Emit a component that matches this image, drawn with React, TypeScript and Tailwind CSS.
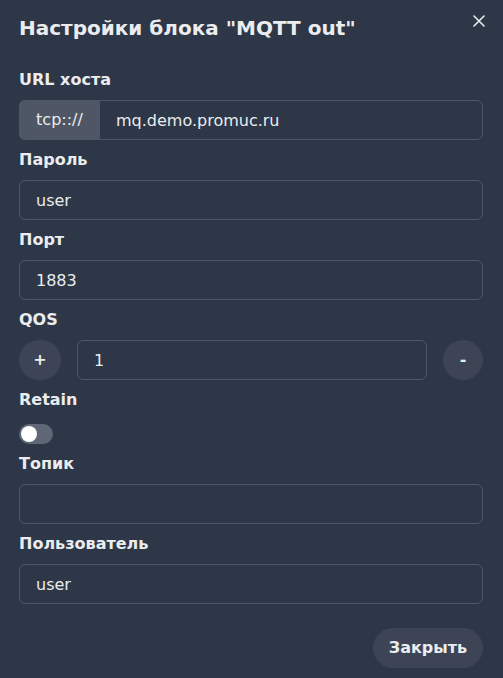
import React, { useState } from "react";

function Field({ label, children }: { label: string; children: React.ReactNode }) {
  return (
    <div className="flex flex-col">
      <label className="text-base leading-6 font-bold text-[#ebecee] mb-2">{label}</label>
      {children}
    </div>
  );
}

function TextInput({ value }: { value: string }) {
  return (
    <input
      defaultValue={value}
      className="h-10 w-full rounded-md border border-[#4f5665] bg-transparent px-4 text-base text-[#ebecee] outline-none"
    />
  );
}

export default function App() {
  const [retain, setRetain] = useState(false);
  const [qos, setQos] = useState(1);

  return (
    <div
      className="relative min-h-[678px] w-full bg-[#2d3748] pl-[19px] pr-[20px] pt-[14px] text-[#ebecee]"
      style={{ fontFamily: '"DejaVu Sans", sans-serif' }}
    >
      <h2 className="text-xl leading-7 font-bold">Настройки блока "MQTT out"</h2>
      <button className="absolute right-[8px] top-[5px] flex h-8 w-8 items-center justify-center rounded-md text-[#ebecee]">
        <svg width="12" height="12" viewBox="0 0 12 12" fill="none">
          <path d="M1 1L11 11M11 1L1 11" stroke="currentColor" strokeWidth="1.6" strokeLinecap="round" />
        </svg>
      </button>

      <div className="mt-[26px] flex flex-col gap-2">
        <Field label="URL хоста">
          <div className="flex h-10 w-full">
            <div className="flex w-20 shrink-0 items-center justify-center rounded-l-md border border-r-0 border-[#4f5665] bg-[#4f5665] text-base">
              tcp:://
            </div>
            <input
              defaultValue="mq.demo.promuc.ru"
              className="h-10 min-w-0 flex-1 rounded-r-md border border-[#4f5665] bg-transparent px-4 text-base text-[#ebecee] outline-none"
            />
          </div>
        </Field>
        <Field label="Пароль">
          <TextInput value="user" />
        </Field>
        <Field label="Порт">
          <TextInput value="1883" />
        </Field>
        <Field label="QOS">
          <div className="flex items-center gap-4">
            <button
              onClick={() => setQos(qos + 1)}
              className="flex h-10 w-[42px] shrink-0 items-center justify-center rounded-full bg-[#3c4455] text-base font-bold"
            >
              +
            </button>
            <input
              value={qos}
              onChange={(e) => setQos(Number(e.target.value) || 0)}
              className="h-10 min-w-0 flex-1 rounded-md border border-[#4f5665] bg-transparent px-4 text-base text-[#ebecee] outline-none"
            />
            <button
              onClick={() => setQos(Math.max(0, qos - 1))}
              className="flex h-10 w-10 shrink-0 items-center justify-center rounded-full bg-[#3c4455] text-base font-bold"
            >
              -
            </button>
          </div>
        </Field>
        <Field label="Retain">
          <div className="flex h-6 items-end">
            <button
              onClick={() => setRetain(!retain)}
              className={
                retain
                  ? "flex h-5 w-[34px] items-center justify-end rounded-full bg-[#90cdf4] p-[2px]"
                  : "flex h-5 w-[34px] items-center justify-start rounded-full bg-[#5f6777] p-[2px]"
              }
            >
              <span className="block h-4 w-4 rounded-full bg-white" />
            </button>
          </div>
        </Field>
        <Field label="Топик">
          <TextInput value="" />
        </Field>
        <Field label="Пользователь">
          <TextInput value="user" />
        </Field>
      </div>

      <div className="mt-6 flex justify-end pb-4">
        <button className="h-10 w-[110px] rounded-full bg-[#3c4455] text-base font-bold text-[#ebecee]">
          Закрыть
        </button>
      </div>
    </div>
  );
}
